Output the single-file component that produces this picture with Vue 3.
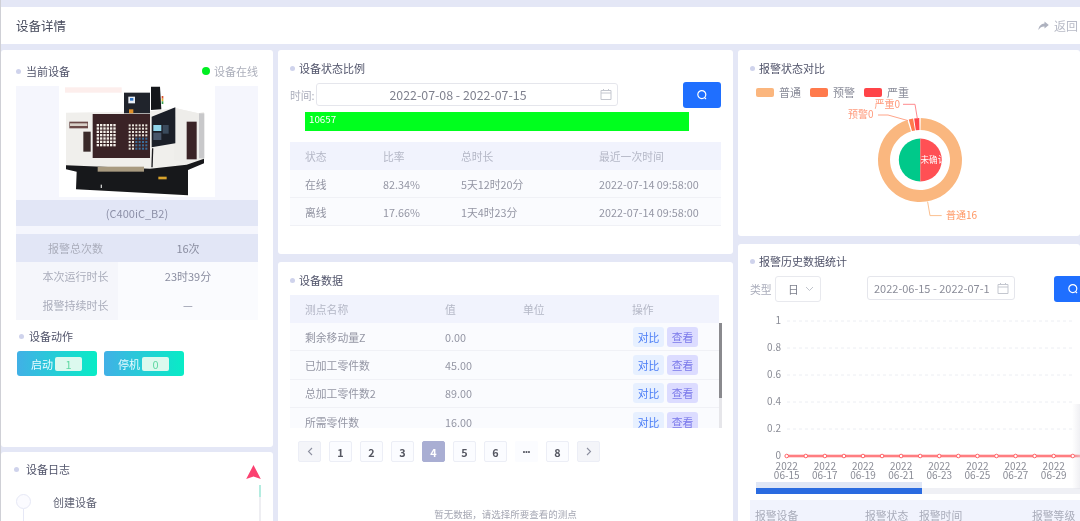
<script setup>
const infoRows = [
  { label: '报警总次数', value: '16次', head: true },
  { label: '本次运行时长', value: '23时39分' },
  { label: '报警持续时长', value: '—' },
]
const actions = [
  { name: '启动', count: 1 },
  { name: '停机', count: 0 },
]
const statusRows = [
  ['在线', '82.34%', '5天12时20分', '2022-07-14 09:58:00'],
  ['离线', '17.66%', '1天4时23分', '2022-07-14 09:58:00'],
]
const dataRows = [
  ['剩余移动量Z', '0.00'],
  ['已加工零件数', '45.00'],
  ['总加工零件数2', '89.00'],
  ['所需零件数', '16.00'],
]
const pages = ['1', '2', '3', '4', '5', '6', '•••', '8']

// donut slice, angles in degrees clockwise from 12 o'clock
function slice(a1, a2, r0, r1, cx = 920, cy = 160) {
  const pt = (a, r) => {
    const t = (a * Math.PI) / 180
    return `${(cx + r * Math.sin(t)).toFixed(2)} ${(cy - r * Math.cos(t)).toFixed(2)}`
  }
  const big = a2 - a1 > 180 ? 1 : 0
  return `M${pt(a1, r1)} A${r1} ${r1} 0 ${big} 1 ${pt(a2, r1)} L${pt(a2, r0)} A${r0} ${r0} 0 ${big} 0 ${pt(a1, r0)} Z`
}
const ringPath = slice(1, 342.5, 30, 42)
const warnPath = slice(344.5, 350.5, 30, 42)
const severePath = slice(352, 359, 30, 42)

// chart geometry is in page pixels, the svg viewBox lines up with them
const yTicks = [
  { label: '1', y: 321 },
  { label: '0.8', y: 348 },
  { label: '0.6', y: 375 },
  { label: '0.4', y: 402 },
  { label: '0.2', y: 429 },
  { label: '0', y: 456 },
]
const points = Array.from({ length: 17 }, (_, i) => 786.7 + i * 19.07)
const xLabels = ['06-15', '06-17', '06-19', '06-21', '06-23', '06-25', '06-27', '06-29']

const panelDots = []
for (let r = 0; r < 7; r++) {
  for (let c = 0; c < 6; c++) panelDots.push({ x: 140 + c * 10, y: 132 + r * 10 })
}
const keyDots = []
for (let r = 0; r < 8; r++) {
  for (let c = 0; c < 6; c++) {
    keyDots.push({ x: 236 + c * 10, y: 133 + r * 10, blue: r > 3 && c > 1 })
  }
}
</script>

<template>
  <div class="page">
    <i class="corner"></i>
    <header class="top">
      <h1>设备详情</h1>
      <span class="back">
        <svg width="11" height="10" viewBox="0 0 11 10"><path d="M6.5 0.5 L10.8 4 L6.5 7.5 V5.4 C4 5.3 2 6.3 0.4 9 C0.8 5.4 3 2.9 6.5 2.6 Z" fill="#aeb2bf"/></svg>
        返回
      </span>
    </header>

    <div class="columns">
      <!-- left column -->
      <div class="col">
        <section class="card device">
          <div class="title-row">
            <h2 class="title">当前设备</h2>
            <span class="online"><i></i>设备在线</span>
          </div>
          <div class="photo">
            <svg class="machine" viewBox="27 18 468 333" width="156" height="111">
              <rect x="27" y="18" width="468" height="333" fill="#fff"/>
              <rect x="45" y="22" width="170" height="16" fill="#fdeeec"/>
              <path d="M48 98 L300 94 L375 84 L445 100 L462 97 L462 238 L410 262 L300 268 L48 258 Z" fill="#f0efec"/>
              <path d="M375 84 L445 100 L462 97 L462 238 L410 250 L372 240 Z" fill="#eeedea"/>
              <rect x="128" y="102" width="172" height="132" fill="#3a2326"/>
              <rect x="58" y="125" width="56" height="20" fill="#6b4a48"/>
              <rect x="60" y="130" width="52" height="8" fill="#d8d0c8"/>
              <rect x="100" y="155" width="22" height="60" fill="#3a2a2a"/>
              <rect v-for="(d, i) in panelDots" :key="'p' + i" :x="d.x" :y="d.y" width="7" height="7" fill="#f2eee8"/>
              <rect v-for="(d, i) in keyDots" :key="'k' + i" :x="d.x" :y="d.y" width="6" height="6" :fill="d.blue ? '#3a6d9a' : '#e8e4dc'"/>
              <rect x="222" y="38" width="78" height="62" fill="#20242c"/>
              <rect x="235" y="50" width="20" height="20" fill="#e8eef6"/>
              <rect x="240" y="54" width="10" height="8" fill="#3277c8"/>
              <rect x="237" y="88" width="13" height="12" fill="#e0902a"/>
              <path d="M303 20 L330 20 L334 88 L303 90 Z" fill="#15171b"/>
              <rect x="335" y="48" width="5" height="8" fill="#d8502c"/>
              <rect x="335" y="56" width="5" height="8" fill="#e0b030"/>
              <rect x="335" y="64" width="5" height="8" fill="#3aa050"/>
              <path d="M305 110 L376 82 L376 190 L305 202 Z" fill="#1b1f28"/>
              <rect x="310" y="135" width="24" height="18" fill="#8fd4ea"/>
              <rect x="338" y="135" width="18" height="26" fill="#3a4a5c"/>
              <rect x="310" y="158" width="24" height="22" fill="#48566a"/>
              <path d="M308 205 L306 262" stroke="#1c1c20" stroke-width="4" fill="none"/>
              <rect x="410" y="125" width="30" height="113" fill="#3a2326"/>
              <rect x="447" y="100" width="16" height="135" fill="#c8c8ca"/>
              <path d="M48 256 L300 266 L410 254 L462 236 L462 250 L414 270 L414 346 L78 328 L80 275 L48 268 Z" fill="#17181b"/>
              <rect x="143" y="260" width="139" height="15" fill="#a89a80"/>
              <rect x="325" y="290" width="25" height="8" fill="#d9a32c"/>
              <rect x="152" y="314" width="4" height="10" fill="#ccc"/>
            </svg>
          </div>
          <div class="caption">(C400iC_B2)</div>
          <div class="info">
            <div v-for="row in infoRows" :key="row.label" class="info-row" :class="{ head: row.head }">
              <span class="info-label">{{ row.label }}</span>
              <span class="info-value">{{ row.value }}</span>
            </div>
          </div>
          <h2 class="title action-title">设备动作</h2>
          <div class="actions">
            <div v-for="a in actions" :key="a.name" class="action">
              <span>{{ a.name }}</span>
              <b>{{ a.count }}</b>
            </div>
          </div>
        </section>

        <section class="card log">
          <h2 class="title">设备日志</h2>
          <svg class="log-arrow" width="15" height="15" viewBox="0 0 15 15"><path d="M7.5 0 L14.8 14 L7.5 11.5 L0.2 14 Z" fill="#fb4170"/></svg>
          <div class="log-item">
            <i class="log-node"></i>
            <span>创建设备</span>
          </div>
          <div class="log-scroll"><i></i></div>
        </section>
      </div>

      <!-- middle column -->
      <div class="col">
        <section class="card state">
          <h2 class="title">设备状态比例</h2>
          <div class="filter">
            <label>时间:</label>
            <div class="date-input wide">
              <span>2022-07-08 - 2022-07-15</span>
              <svg class="cal" width="12" height="11" viewBox="0 0 12 11"><path d="M1 1.5 H11 V10.5 H1 Z M1 4 H11 M3.5 0 V2 M8.5 0 V2" fill="none" stroke="#c4c7cf" stroke-width="1"/></svg>
            </div>
            <button class="search">
              <svg width="12" height="12" viewBox="0 0 12 12"><circle cx="5.8" cy="5.6" r="4" fill="none" stroke="#fff" stroke-width="1.2"/><path d="M8.6 8.6 L10 10" stroke="#fff" stroke-width="1.2"/></svg>
            </button>
          </div>
          <div class="ratio">10657</div>
          <div class="state-table">
            <div class="thead"><span>状态</span><span>比率</span><span>总时长</span><span>最近一次时间</span></div>
            <div v-for="row in statusRows" :key="row[0]" class="trow">
              <span v-for="cell in row" :key="cell">{{ cell }}</span>
            </div>
          </div>
        </section>

        <section class="card data">
          <h2 class="title">设备数据</h2>
          <div class="data-table">
            <div class="grid-table-head"><span>测点名称</span><span>值</span><span>单位</span><span>操作</span></div>
            <div class="data-body">
              <div v-for="row in dataRows" :key="row[0]" class="data-row">
                <span>{{ row[0] }}</span>
                <span>{{ row[1] }}</span>
                <span></span>
                <span class="ops"><em class="op-blue">对比</em><em class="op-purple">查看</em></span>
              </div>
            </div>
            <div class="scrollbar"><i></i></div>
          </div>
          <div class="pager">
            <span class="pg arrow">
              <svg width="6" height="9" viewBox="0 0 6 9"><path d="M5 1 L1.5 4.5 L5 8" fill="none" stroke="#8d90a0" stroke-width="1.1"/></svg>
            </span>
            <span v-for="p in pages" :key="p" class="pg" :class="{ active: p === '4', more: p === '•••' }">{{ p }}</span>
            <span class="pg arrow">
              <svg width="6" height="9" viewBox="0 0 6 9"><path d="M1 1 L4.5 4.5 L1 8" fill="none" stroke="#8d90a0" stroke-width="1.1"/></svg>
            </span>
          </div>
          <p class="empty">暂无数据，请选择所要查看的测点</p>
        </section>
      </div>

      <!-- right column -->
      <div class="col">
        <section class="card alarm">
          <h2 class="title">报警状态对比</h2>
          <div class="legend">
            <span><i style="background:#fbb67e"></i>普通</span>
            <span><i style="background:#ff7a4c"></i>预警</span>
            <span><i style="background:#ff4448"></i>严重</span>
          </div>
          <svg class="donut" viewBox="738 50 342 186" width="342" height="186">
            <defs>
              <clipPath id="pieClip"><circle cx="920.3" cy="160" r="21.5"/></clipPath>
            </defs>
            <path :d="ringPath" fill="#fab77f"/>
            <path :d="warnPath" fill="#ff7a4c"/>
            <path :d="severePath" fill="#ff4448"/>
            <path d="M920.3 138.5 A21.5 21.5 0 0 0 920.3 181.5 Z" fill="#00c98a"/>
            <path d="M920.3 138.5 A21.5 21.5 0 0 1 920.3 181.5 Z" fill="#ff5054"/>
            <text x="920.5" y="163" class="pie-text" clip-path="url(#pieClip)">未确认</text>
            <path d="M878 115 H888 L908 120.6" fill="none" stroke="#ffa58a" stroke-width="1"/>
            <path d="M903 104.3 H915 L917.3 118.3" fill="none" stroke="#ff8a8e" stroke-width="1"/>
            <path d="M927.6 201.6 L930 215.6 H941.7" fill="none" stroke="#fbc090" stroke-width="1"/>
            <text x="873.5" y="118" text-anchor="end" class="lbl" fill="#ff9a7c">预警0</text>
            <text x="900" y="108" text-anchor="end" class="lbl" fill="#ff9a7c">严重0</text>
            <text x="946" y="219" class="lbl" fill="#ff9560">普通16</text>
          </svg>
        </section>

        <section class="card history">
          <h2 class="title">报警历史数据统计</h2>
          <div class="history-filter">
            <label>类型</label>
            <div class="select">
              日
              <svg width="9" height="6" viewBox="0 0 9 6"><path d="M1 1 L4.5 4.5 L8 1" fill="none" stroke="#c0c4cc" stroke-width="1"/></svg>
            </div>
            <div class="date-input narrow">
              <span>2022-06-15 - 2022-07-1</span>
              <svg class="cal" width="12" height="11" viewBox="0 0 12 11"><path d="M1 1.5 H11 V10.5 H1 Z M1 4 H11 M3.5 0 V2 M8.5 0 V2" fill="none" stroke="#c4c7cf" stroke-width="1"/></svg>
            </div>
            <button class="search">
              <svg width="12" height="12" viewBox="0 0 12 12"><circle cx="5.8" cy="5.6" r="4" fill="none" stroke="#fff" stroke-width="1.2"/><path d="M8.6 8.6 L10 10" stroke="#fff" stroke-width="1.2"/></svg>
            </button>
          </div>
          <svg class="line-chart" viewBox="738 310 342 172" width="342" height="172">
            <g v-for="t in yTicks" :key="t.label">
              <line v-if="t.y < 456" x1="787" x2="1074" :y1="t.y" :y2="t.y" stroke="#eceef3" stroke-dasharray="3 3"/>
              <text x="781" :y="t.y + 3" text-anchor="end" class="axis">{{ t.label }}</text>
            </g>
            <line x1="787" x2="1080" y1="456" y2="456" stroke="#ff6468" stroke-opacity="0.35" stroke-width="3.5"/>
            <line x1="787" x2="1080" y1="456" y2="456" stroke="#ff6468" stroke-width="1.6"/>
            <circle v-for="x in points" :key="x" :cx="x" cy="456" r="1.8" fill="#fff" stroke="#ff6468" stroke-width="1"/>
            <g v-for="(d, i) in xLabels" :key="d">
              <text :x="786.7 + i * 38.14" y="470" text-anchor="middle" class="axis">2022</text>
              <text :x="786.7 + i * 38.14" y="478.5" text-anchor="middle" class="axis">{{ d }}</text>
            </g>
          </svg>
          <div class="zoom-bar"><i></i></div>
          <div class="alarm-head"><span>报警设备</span><span>报警状态</span><span>报警时间</span><span>报警等级</span></div>
          <i class="edge-shade"></i>
        </section>
      </div>
    </div>
  </div>
</template>

<style>
html, body {
  margin: 0;
  background: #e6e9f8;
  overflow: hidden;
}
</style>

<style scoped>
.page {
  position: relative;
  width: 1080px;
  height: 521px;
  padding-top: 7px;
  box-sizing: border-box;
  overflow: hidden;
  background: #e4e7f6;
  border-left: 1px solid #cfd0d6;
  font-family: "Noto Sans CJK SC", "Noto Sans", sans-serif;
  font-size: 10.8px;
  color: #8f92a2;
  filter: blur(0.4px);
}
.corner {
  position: absolute;
  left: -1px;
  top: 0;
  width: 1px;
  height: 15px;
  background: #3a3d4a;
}
.top {
  height: 37px;
  background: #fff;
  display: flex;
  align-items: center;
  justify-content: space-between;
  padding: 0 2px 0 15px;
}
.top h1 {
  margin: 0;
  font-size: 12.5px;
  font-weight: 400;
  color: #44485a;
}
.back {
  display: flex;
  align-items: center;
  gap: 5px;
  font-size: 12px;
  color: #b7bac6;
}
.columns {
  display: grid;
  grid-template-columns: 272px 455px 342px;
  column-gap: 5px;
  margin-top: 6px;
}
.col {
  display: flex;
  flex-direction: column;
  gap: 8px;
  height: 480px;
}
.card {
  position: relative;
  background: #fff;
  border-radius: 3px;
  box-sizing: border-box;
  overflow: hidden;
}
.title {
  position: relative;
  margin: 0;
  padding-left: 9px;
  font-size: 11px;
  line-height: 14px;
  font-weight: 400;
  color: #50536a;
}
.title::before {
  content: "";
  position: absolute;
  left: 0;
  top: 4.5px;
  width: 5px;
  height: 5px;
  border-radius: 50%;
  background: #cfd3ec;
}

/* left */
.device {
  height: 397px;
  padding: 14px 15px 0;
  margin-bottom: -3px;
}
.title-row {
  display: flex;
  justify-content: space-between;
  align-items: center;
  height: 14px;
  margin-bottom: 8px;
}
.device .title-row .title {
  padding-left: 10px;
}
.online {
  display: flex;
  align-items: center;
  gap: 4px;
  font-size: 11px;
  line-height: 14px;
  color: #acafbb;
}
.online i {
  width: 8px;
  height: 8px;
  border-radius: 50%;
  background: #00ee22;
}
.photo {
  height: 114px;
  background: #f5f6fd;
  display: flex;
  justify-content: center;
  align-items: flex-start;
}
.machine {
  display: block;
  filter: blur(0.5px);
}
.caption {
  height: 26px;
  line-height: 26px;
  text-align: center;
  font-size: 11px;
  background: #e2e6f6;
  color: #8d90a8;
}
.info {
  background: #f5f6fd;
  padding-top: 8px;
}
.info-row {
  display: grid;
  grid-template-columns: 102px 1fr;
  height: 29px;
  line-height: 29px;
  text-align: center;
  background: #fafbfe;
  font-size: 11px;
  color: #8a8da0;
}
.info-label {
  padding-left: 17px;
  background: #f5f6fb;
  color: #aaadbb;
}
.info-row.head {
  height: 28px;
  line-height: 28px;
  background: #e2e6f6;
}
.info-row.head .info-label {
  background: transparent;
}
.action-title {
  margin: 9px 0 0 3px;
  padding-left: 10px;
}
.actions {
  display: flex;
  gap: 7px;
  margin-top: 8px;
  padding-left: 1px;
}
.action {
  width: 80px;
  height: 25px;
  border-radius: 3px;
  background: linear-gradient(90deg, #41b0e6, #08ecc6);
  display: flex;
  align-items: center;
  padding-left: 14px;
  box-sizing: border-box;
  gap: 2px;
  font-size: 11px;
  color: #eafcff;
}
.action b {
  width: 27px;
  height: 14px;
  line-height: 14px;
  text-align: center;
  border-radius: 2px;
  background: #dcf9ee;
  color: #5fd8a2;
  font-weight: 400;
}
.log {
  flex: 1;
  padding: 10px 13px;
}
.log .title {
  padding-left: 12px;
}
.log-arrow {
  position: absolute;
  right: 12px;
  top: 13px;
}
.log-item {
  position: relative;
  display: flex;
  align-items: center;
  margin-top: 18px;
  padding-left: 39px;
  font-size: 11px;
  color: #5f6274;
}
.log-node {
  position: absolute;
  left: 2px;
  top: 0;
  width: 15px;
  height: 15px;
  box-sizing: border-box;
  border: 1px solid #e6e8f6;
  border-radius: 50%;
  background: #fbfbff;
}
.log-node::after {
  content: "";
  position: absolute;
  left: 6px;
  top: 14px;
  width: 1px;
  height: 20px;
  background: #e6e8f6;
}
.log-scroll {
  position: absolute;
  right: 12px;
  top: 33px;
  bottom: 0;
  width: 2px;
  background: #eeeef2;
}
.log-scroll i {
  display: block;
  height: 12px;
  background: #b4ece0;
}

/* middle */
.state {
  height: 204px;
  padding: 11px 12px 0;
}
.filter {
  display: flex;
  align-items: flex-start;
  margin-top: 7px;
}
.filter label {
  width: 26px;
  align-self: center;
  color: #aaadbb;
}
.date-input {
  position: relative;
  flex: none;
  box-sizing: border-box;
  border: 1px solid #e5e6ec;
  border-radius: 3px;
  display: flex;
  align-items: center;
  background: #fff;
}
.cal {
  position: absolute;
  right: 5px;
  top: 50%;
  margin-top: -5.5px;
}
.wide {
  width: 302px;
  height: 23px;
  margin-top: 1px;
  justify-content: center;
  padding-right: 18px;
  font-size: 12.4px;
  color: #7f818e;
}
.search {
  flex: none;
  margin-left: auto;
  width: 38px;
  height: 26px;
  border: 0;
  padding: 0;
  border-radius: 3px;
  background: #1f6fff;
  display: flex;
  align-items: center;
  justify-content: center;
}
.ratio {
  width: 384px;
  height: 19px;
  margin: 4px 0 0 15px;
  padding-left: 4px;
  box-sizing: border-box;
  background: #00ff1e;
  color: #fff;
  font-size: 9.8px;
  line-height: 14px;
}
.state-table {
  margin-top: 11px;
}
.thead, .trow {
  display: grid;
  grid-template-columns: 78px 78px 138px 1fr;
  padding-left: 15px;
  align-items: center;
}
.thead {
  height: 28px;
  background: #f1f3fd;
  color: #b4b7c6;
}
.trow {
  height: 28px;
  background: #fafbfe;
  border-bottom: 1px solid #f0f1f6;
  box-sizing: border-box;
  color: #9496a4;
}
.data {
  flex: 1;
  padding: 11px 12px 0;
}
.data-table {
  position: relative;
  margin-top: 8px;
  width: 429px;
}
.grid-table-head, .data-row {
  display: grid;
  grid-template-columns: 140px 78px 109px 1fr;
  padding-left: 15px;
  align-items: center;
}
.grid-table-head {
  height: 28px;
  background: #f1f3fd;
  color: #b4b7c6;
}
.data-body {
  height: 105px;
  overflow: hidden;
}
.data-row {
  height: 28.3px;
  background: #fafbfe;
  border-bottom: 1px solid #f0f1f6;
  box-sizing: border-box;
  color: #9496a4;
}
.ops {
  display: flex;
  gap: 3px;
  margin-left: 1px;
}
.ops em {
  width: 31px;
  height: 20px;
  line-height: 20px;
  text-align: center;
  border-radius: 3px;
  font-style: normal;
}
.op-blue {
  background: #e7f0ff;
  color: #4a7cf6;
}
.op-purple {
  background: #dcdcff;
  color: #7a78ea;
}
.scrollbar {
  position: absolute;
  left: 429px;
  top: 28px;
  width: 3px;
  height: 105px;
  background: #e6e6ea;
}
.scrollbar i {
  display: block;
  height: 75px;
  background: #8a8a8e;
}
.pager {
  display: flex;
  gap: 8px;
  margin: 13px 0 0 8px;
}
.pg {
  width: 23px;
  height: 21px;
  box-sizing: border-box;
  display: flex;
  align-items: center;
  justify-content: center;
  border: 1px solid #eceef6;
  border-radius: 2px;
  background: #fbfcff;
  color: #555762;
  font-weight: 700;
}
.pg.arrow {
  background: #f4f5f9;
}
.pg.active {
  background: #a9aed3;
  border-color: #a9aed3;
  color: #fff;
}
.pg.more {
  border-color: #fbfcff;
  font-family: "Liberation Sans", sans-serif;
  font-size: 7px;
}
.empty {
  margin: 45px 0 0;
  text-align: center;
  font-size: 9.5px;
  color: #a4a6b2;
}

/* right */
.alarm {
  height: 186px;
  padding: 11px 12px 0;
}
.legend {
  display: flex;
  gap: 9px;
  margin: 9px 0 0 6px;
  font-size: 11px;
  color: #8a8c99;
}
.legend span {
  display: flex;
  align-items: center;
  gap: 5px;
}
.legend i {
  width: 18px;
  height: 9px;
  border-radius: 2px;
}
.donut {
  position: absolute;
  left: 0;
  top: 0;
}
.lbl {
  font-size: 10px;
}
.pie-text {
  font-size: 8.6px;
  fill: #fff;
}
.history {
  flex: 1;
  padding: 10px 0 0 12px;
}
.history-filter {
  display: flex;
  align-items: flex-start;
  margin-top: 8px;
  height: 26px;
}
.history-filter label {
  flex: none;
  width: 25px;
  align-self: center;
  color: #aaadbb;
}
.select {
  flex: none;
  box-sizing: border-box;
  width: 46px;
  height: 26px;
  border: 1px solid #e8e9ee;
  border-radius: 3px;
  display: flex;
  align-items: center;
  gap: 6px;
  padding-left: 12px;
  color: #7c7f8c;
}
.narrow {
  width: 148px;
  height: 24px;
  margin-left: 46px;
  padding-left: 6px;
  font-size: 11px;
  color: #8b8d99;
}
.history .search {
  margin-left: 39px;
}
.line-chart {
  display: block;
  margin: 8px 0 0 -12px;
}
.axis {
  font-size: 10px;
  fill: #8a8c96;
}
.zoom-bar {
  height: 12px;
  margin-left: 6px;
  background: linear-gradient(#fff 0 50%, #eff0f5 50%);
  position: relative;
}
.zoom-bar i {
  position: absolute;
  left: 0;
  top: 0;
  width: 166px;
  height: 12px;
  background: linear-gradient(#dfe6f6 0 50%, #2a6be0 50%);
}
.alarm-head {
  position: relative;
  height: 30px;
  margin: 6px 0 0 0;
  background: #f1f3fd;
  color: #a9acba;
  padding-left: 5px;
  display: grid;
  grid-template-columns: 110px 54px 113px 1fr;
  align-items: center;
}
.edge-shade {
  position: absolute;
  right: 0;
  top: 160px;
  width: 8px;
  height: 85px;
  background: linear-gradient(90deg, rgba(230, 230, 235, 0), rgba(225, 225, 232, 0.5));
}
</style>
